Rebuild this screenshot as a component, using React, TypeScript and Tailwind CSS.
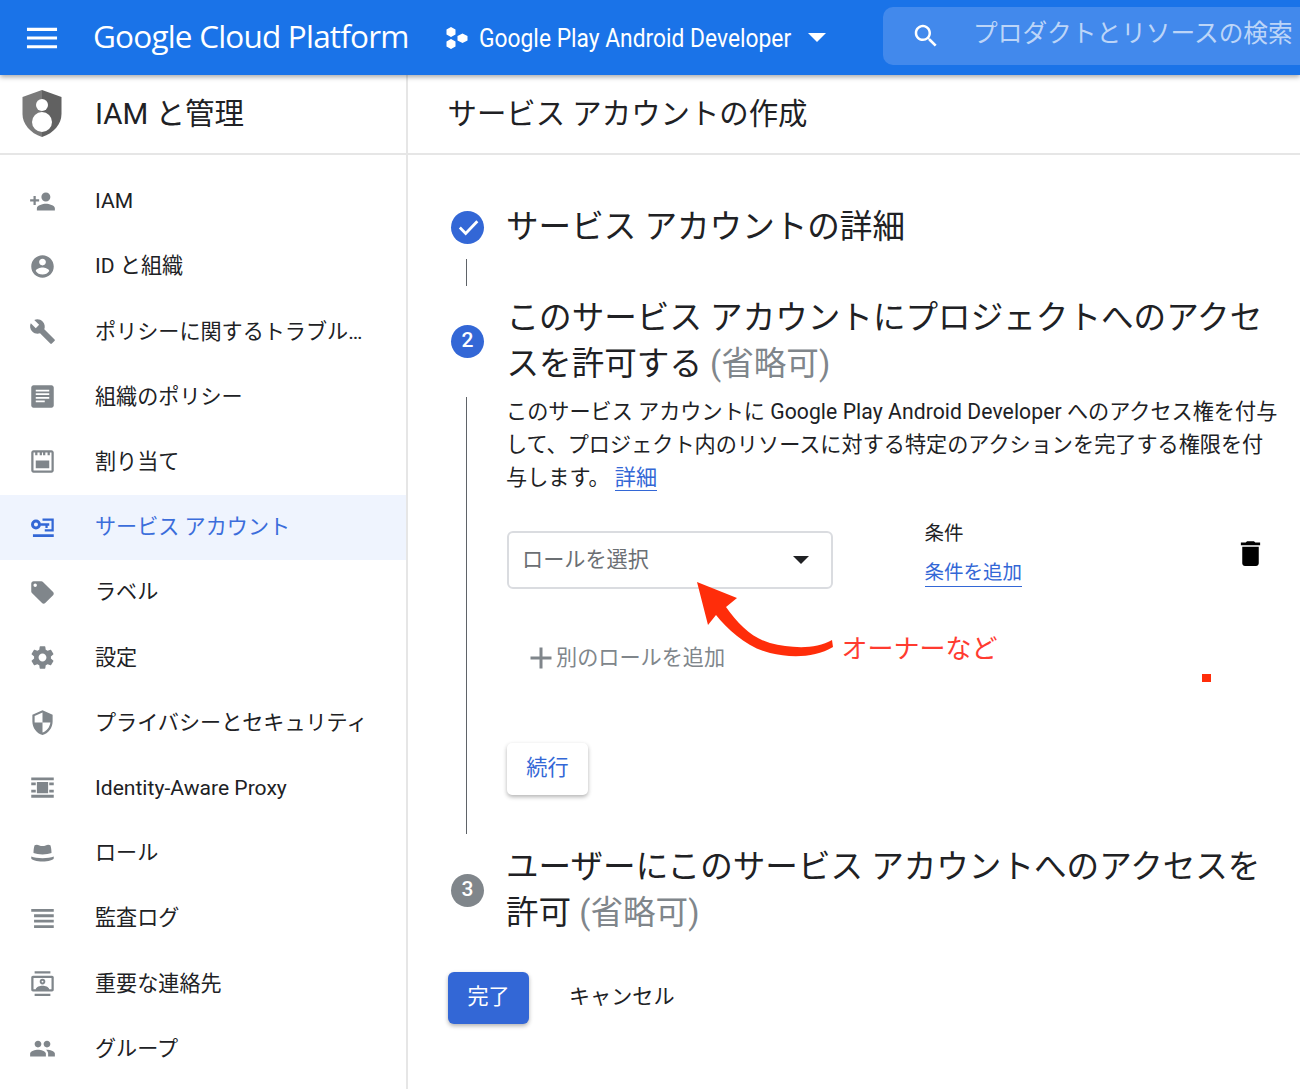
import type { ReactNode } from "react";

const FONT = "font-['Roboto','Noto_Sans_CJK_JP',sans-serif]";

function Icon({ children, className = "" }: { children: ReactNode; className?: string }) {
  return (
    <svg viewBox="0 0 24 24" fill="currentColor" className={className}>
      {children}
    </svg>
  );
}

const navItems: { label: string; active?: boolean; icon: ReactNode }[] = [
  {
    label: "IAM",
    icon: <path d="M15 12c2.21 0 4-1.79 4-4s-1.79-4-4-4-4 1.79-4 4 1.79 4 4 4zm-9-2V7H4v3H1v2h3v3h2v-3h3v-2H6zm9 4c-2.67 0-8 1.34-8 4v2h16v-2c0-2.66-5.33-4-8-4z" />,
  },
  {
    label: "ID と組織",
    icon: <path d="M12 2C6.48 2 2 6.48 2 12s4.48 10 10 10 10-4.48 10-10S17.52 2 12 2zm0 3c1.66 0 3 1.34 3 3s-1.34 3-3 3-3-1.34-3-3 1.34-3 3-3zm0 14.2c-2.5 0-4.71-1.28-6-3.22.03-1.99 4-3.08 6-3.08 1.99 0 5.97 1.09 6 3.08-1.29 1.94-3.5 3.22-6 3.22z" />,
  },
  {
    label: "ポリシーに関するトラブル…",
    icon: <path d="M22.7 19l-9.1-9.1c.9-2.3.4-5-1.5-6.9-2-2-5-2.4-7.4-1.3L9 6 6 9 1.6 4.7C.4 7.1.9 10.1 2.9 12.1c1.9 1.9 4.6 2.4 6.9 1.5l9.1 9.1c.4.4 1 .4 1.4 0l2.3-2.3c.5-.4.5-1.1.1-1.4z" />,
  },
  {
    label: "組織のポリシー",
    icon: <path fillRule="evenodd" d="M4 2h16c1.1 0 2 .9 2 2v16c0 1.1-.9 2-2 2H4c-1.1 0-2-.9-2-2V4c0-1.1.9-2 2-2zm2 4v1.5h12V6H6zm0 3.2v1.5h12V9.2H6zm0 3.2v1.5h12v-1.5H6zm0 3.2v1.5h8v-1.5H6z" />,
  },
  {
    label: "割り当て",
    icon: <path fillRule="evenodd" d="M4 2h16c1.1 0 2 .9 2 2v16c0 1.1-.9 2-2 2H4c-1.1 0-2-.9-2-2V4c0-1.1.9-2 2-2zm0 2v16h16V4h-1.5v2.5h-2V4h-2v2.5h-2V4h-1v2.5h-2V4h-2v2.5h-2V4H4zm2 7h12v7H6v-7z" />,
  },
  {
    label: "サービス アカウント",
    active: true,
    icon: (
      <>
        <path fillRule="evenodd" d="M6.200 4.900a4.400 4.400 0 1 1 0 8.800 4.400 4.400 0 0 1 0-8.800zm0 2.600a1.800 1.800 0 1 0 0 3.600 1.800 1.800 0 0 0 0-3.600z" />
        <path d="M10 8.200h8v2.200h-1.400v2h-2v-2H10zM12 4h10v11.500h-8v-2h6V6h-8zM3.500 18H22v2.500H3.500z" />
      </>
    ),
  },
  {
    label: "ラベル",
    icon: <path d="M21.41 11.58l-9-9C12.05 2.22 11.55 2 11 2H4c-1.1 0-2 .9-2 2v7c0 .55.22 1.05.59 1.42l9 9c.36.36.86.58 1.41.58.55 0 1.05-.22 1.41-.59l7-7c.37-.36.59-.86.59-1.41 0-.55-.23-1.06-.59-1.42zM5.5 7C4.67 7 4 6.33 4 5.5S4.67 4 5.5 4 7 4.67 7 5.5 6.33 7 5.5 7z" />,
  },
  {
    label: "設定",
    icon: <path d="M19.43 12.98c.04-.32.07-.64.07-.98s-.03-.66-.07-.98l2.11-1.65c.19-.15.24-.42.12-.64l-2-3.46c-.12-.22-.39-.3-.61-.22l-2.49 1c-.52-.4-1.08-.73-1.69-.98l-.38-2.65C14.46 2.18 14.25 2 14 2h-4c-.25 0-.46.18-.49.42l-.38 2.65c-.61.25-1.17.59-1.69.98l-2.49-1c-.23-.09-.49 0-.61.22l-2 3.46c-.13.22-.07.49.12.64l2.11 1.65c-.04.32-.07.65-.07.98s.03.66.07.98l-2.11 1.65c-.19.15-.24.42-.12.64l2 3.46c.12.22.39.3.61.22l2.49-1c.52.4 1.08.73 1.69.98l.38 2.65c.03.24.24.42.49.42h4c.25 0 .46-.18.49-.42l.38-2.65c.61-.25 1.17-.59 1.69-.98l2.49 1c.23.09.49 0 .61-.22l2-3.46c.12-.22.07-.49-.12-.64l-2.11-1.65zM12 15.5c-1.93 0-3.5-1.57-3.5-3.5s1.57-3.5 3.5-3.5 3.5 1.57 3.5 3.5-1.57 3.5-3.5 3.5z" />,
  },
  {
    label: "プライバシーとセキュリティ",
    icon: <path d="M12 1L3 5v6c0 5.55 3.84 10.74 9 12 5.16-1.26 9-6.45 9-12V5l-9-4zm0 10.99h7c-.53 4.12-3.28 7.79-7 8.94V12H5V6.3l7-3.11v8.8z" />,
  },
  {
    label: "Identity-Aware Proxy",
    icon: <path d="M2 3h20v2.500H2zM2 18.500h20V21H2zM2 7.500h4V10H2zM18 7.500h4V10h-4zM2 14h4v2.500H2zM18 14h4v2.500h-4zM7 7h10v10H7z" />,
  },
  {
    label: "ロール",
    icon: <path d="M5 5.500c1.500-.8 3-.5 4.200.2.900.5 1.700.5 2.800.5s1.900 0 2.800-.5c1.200-.7 2.700-1 4.200-.2.700 2 1 4.500 1 7-2 .8-5 1.300-8 1.300s-6-.5-8-1.300c0-2.500.3-5 1-7zM2 15.500c2.500 1 6 1.500 10 1.500s7.500-.5 10-1.500V17c0 1.500-5 3-10 3S2 18.500 2 17v-1.500z" />,
  },
  {
    label: "監査ログ",
    icon: <path d="M2 3.500h20v2.500H2V3.500zm2.500 4.800H22v2.500H4.500V8.300zm0 4.800H22v2.500H4.500v-2.500zm0 4.800H22v2.500H4.500v-2.500z" />,
  },
  {
    label: "重要な連絡先",
    icon: <path fillRule="evenodd" d="M5 1h14v2H5V1zm0 20h14v2H5v-2zM3.500 5h17C21.300 5 22 5.700 22 6.500v11c0 .8-.7 1.500-1.500 1.500h-17C2.700 19 2 18.300 2 17.500v-11C2 5.700 2.700 5 3.500 5zM4 7v10h2c.5-2 3.500-3 6-3s5.500 1 6 3h2V7H4zm8 .8a2.500 2.500 0 1 1 0 5 2.500 2.500 0 0 1 0-5zm0 1.700a.8.8 0 1 0 0 1.600.8.8 0 0 0 0-1.600z" />,
  },
  {
    label: "グループ",
    icon: <path d="M16 11c1.66 0 2.99-1.34 2.99-3S17.66 5 16 5c-1.66 0-3 1.34-3 3s1.34 3 3 3zm-8 0c1.66 0 2.99-1.34 2.99-3S9.66 5 8 5C6.34 5 5 6.34 5 8s1.34 3 3 3zm0 2c-2.33 0-7 1.170-7 3.500V19h14v-2.500c0-2.330-4.670-3.500-7-3.500zm8 0c-.29 0-.62.02-.97.05 1.160.84 1.970 1.970 1.970 3.450V19h6v-2.500c0-2.330-4.670-3.500-7-3.500z" />,
  },
];

function Header() {
  return (
    <header className="relative z-10 flex h-[75px] items-center bg-[#1a73e8] text-white shadow-[0_2px_5px_rgba(0,0,0,0.35)]">
      <Icon className="ml-[23px] h-[38px] w-[38px] shrink-0">
        <path d="M2.500 5.500h19v2h-19zM2.500 11h19v2h-19zM2.500 16.500h19v2h-19z" />
      </Icon>
      <span className="mb-[4px] ml-[32px] w-[353px] shrink-0 font-['Open_Sans',sans-serif] text-[31.500px] tracking-[-0.8px] whitespace-nowrap">
        Google Cloud Platform
      </span>
      <svg viewBox="0 0 22 24" fill="currentColor" className="h-[24px] w-[22px] shrink-0">
        <path d="M5 1 9.500 3.500v5L5 11 .5 8.500v-5zM5 13 9.500 15.500v5L5 23 .5 20.500v-5zM16.500 7.500 21.500 10v4.500L16.500 17l-5-2.500V10z" />
      </svg>
      <span className="mt-[2px] ml-[11px] w-[312px] shrink-0 origin-left scale-x-[0.912] text-[25px] whitespace-nowrap">
        Google Play Android Developer
      </span>
      <span className="ml-[17px] h-0 w-0 shrink-0 border-x-[9px] border-t-[9px] border-x-transparent border-t-white" />
      <div className="mb-[3px] ml-[57px] flex h-[58px] flex-1 items-center overflow-hidden rounded-l-[10px] bg-[#4289ec]">
        <Icon className="ml-[28px] h-[30px] w-[30px] shrink-0">
          <path d="M15.500 14h-.79l-.28-.27C15.410 12.590 16 11.110 16 9.500 16 5.910 13.090 3 9.500 3S3 5.910 3 9.500 5.910 16 9.500 16c1.610 0 3.090-.59 4.230-1.570l.27.28v.79l5 4.990L20.490 19l-4.990-5zm-6 0C7.010 14 5 11.990 5 9.500S7.010 5 9.500 5 14 7.010 14 9.500 11.990 14 9.500 14z" />
        </Icon>
        <span className="mb-[5px] ml-[32px] text-[24.700px] whitespace-nowrap text-[#bcd5f8]">
          プロダクトとリソースの検索
        </span>
      </div>
    </header>
  );
}

function Sidebar() {
  return (
    <aside className="w-[408px] shrink-0 border-r-2 border-[#e6e6e6]">
      <div className="flex h-[80px] items-center border-b-2 border-[#e6e6e6] pl-[22px]">
        <svg viewBox="0 0 40 48" className="h-[48px] w-[40px] shrink-0">
          <path fill="#7a7a7a" d="M20 0 .5 7v17C.5 34 8 43 20 47z" />
          <path fill="#616161" d="M20 0 39.500 7v17C39.500 34 32 43 20 47z" />
          <circle cx="20" cy="15" r="6" fill="#fff" />
          <circle cx="20" cy="32" r="10" fill="#fff" />
        </svg>
        <span className="ml-[33px] text-[29.500px] text-[#202124]">IAM と管理</span>
      </div>
      <nav className="pt-[14px]">
        {navItems.map((item) => (
          <div
            key={item.label}
            className={
              item.active
                ? "flex h-[65.200px] items-center bg-[#eff4fe] pb-[1px] pl-[29px] text-[#3b6ddb]"
                : "flex h-[65.200px] items-center pb-[1px] pl-[29px] text-[#202124]"
            }
          >
            <Icon
              className={
                item.active
                  ? "h-[27px] w-[27px] shrink-0 text-[#3367d6]"
                  : "h-[27px] w-[27px] shrink-0 text-[#80868b]"
              }
            >
              {item.icon}
            </Icon>
            <span className="ml-[39px] text-[21.100px] whitespace-nowrap">{item.label}</span>
          </div>
        ))}
      </nav>
    </aside>
  );
}

function StepBadge({ children, gray }: { children: ReactNode; gray?: boolean }) {
  return (
    <div
      className={
        gray
          ? "ml-[3px] flex h-[33px] w-[33px] items-center justify-center rounded-full bg-[#80868b] text-[21px] font-medium text-white"
          : "ml-[3px] flex h-[33px] w-[33px] items-center justify-center rounded-full bg-[#3367d6] text-[21px] font-medium text-white"
      }
    >
      {children}
    </div>
  );
}

function MainContent() {
  return (
    <main className="relative min-w-0 flex-1">
      <div className="flex h-[80px] items-center border-b-2 border-[#e6e6e6] pt-[1px] pl-[39.500px] text-[29.400px] text-[#202124]">
        サービス アカウントの作成
      </div>
      <div className="pt-[49px] pl-[40px] text-[#202124]">
        <div className="flex items-center">
          <div className="w-[59px] shrink-0">
            <div className="ml-[3px] flex h-[33px] w-[33px] items-center justify-center rounded-full bg-[#3367d6]">
              <svg viewBox="0 0 24 24" fill="none" stroke="#fff" strokeWidth="2.400" className="h-[28px] w-[28px]">
                <path d="M5 12.500l5 5L20 7" />
              </svg>
            </div>
          </div>
          <h2 className="-ml-[1px] text-[32.600px] leading-[46px] font-normal">サービス アカウントの詳細</h2>
        </div>
        <div className="mt-[9px] ml-[18px] h-[27px] w-px bg-[#5f6368]" />

        <div className="mt-[9px] flex items-center">
          <div className="w-[59px] shrink-0">
            <StepBadge>2</StepBadge>
          </div>
          <h2 className="-ml-[0.500px] text-[32.600px] leading-[46px] whitespace-nowrap">
            このサービス アカウントにプロジェクトへのアクセ
            <br />
            スを許可する <span className="text-[#80868b]">(省略可)</span>
          </h2>
        </div>

        <div className="mt-[8px] flex">
          <div className="w-[59px] shrink-0">
            <div className="mt-[2px] ml-[18px] h-[437px] w-px bg-[#5f6368]" />
          </div>
          <div className="-ml-[1px] flex-1">
            <p className="text-[21.150px] leading-[33px] whitespace-nowrap">
              このサービス アカウントに <span className="tracking-[0.07px]">Google Play Android Developer</span> へのアクセス権を付与
              <br />
              して、プロジェクト内のリソースに対する特定のアクションを完了する権限を付
              <br />
              与します。 <span className="border-b border-[#3367d6] text-[#3367d6]">詳細</span>
            </p>

            <div className="mt-[25.500px] flex items-start pr-[33px]">
              <div className="mt-[11px] ml-[1px] flex h-[58px] w-[326px] items-center justify-between rounded-[6px] border-2 border-[#dadce0] pr-[22px] pl-[13px] text-[21.150px] text-[#6b6f73]">
                ロールを選択
                <span className="h-0 w-0 border-x-[8px] border-t-[8px] border-x-transparent border-t-[#202124]" />
              </div>
              <div className="mt-[1px] ml-[91.500px] text-[19.500px]">
                <div className="leading-[26px]">条件</div>
                <div className="mt-[13px] w-fit border-b border-[#3367d6] leading-[26px] text-[#3367d6]">条件を追加</div>
              </div>
              <Icon className="mt-[17px] ml-auto h-[33px] w-[33px] text-black">
                <path d="M6 19c0 1.100.9 2 2 2h8c1.100 0 2-.9 2-2V7H6v12zM19 4h-3.500l-1-1h-5l-1 1H5v2h14V4z" />
              </Icon>
            </div>

            <div className="mt-[54px] flex h-[30px] items-center pl-[17px] text-[21.150px] text-[#80868b]">
              <Icon className="-mr-[3px] h-[36px] w-[36px] shrink-0">
                <path d="M19 13h-6v6h-2v-6H5v-2h6V5h2v6h6v2z" />
              </Icon>
              別のロールを追加
            </div>

            <button className="mt-[70px] ml-[1px] flex h-[52px] w-[81px] items-center justify-center rounded-[5px] bg-white pb-[2px] text-[21.150px] text-[#3367d6] shadow-[0_2px_4px_rgba(0,0,0,0.3)]">
              続行
            </button>
          </div>
        </div>

        <div className="mt-[10px] flex items-center">
          <div className="w-[59px] shrink-0">
            <StepBadge gray>3</StepBadge>
          </div>
          <h2 className="-ml-[1px] text-[32.600px] leading-[46px] whitespace-nowrap">
            ユーザーにこのサービス アカウントへのアクセスを
            <br />
            許可 <span className="text-[#80868b]">(省略可)</span>
          </h2>
        </div>

        <div className="mt-[36px] flex items-center">
          <button className="flex h-[52px] w-[81px] items-center justify-center rounded-[6px] bg-[#3367d6] pb-[2px] text-[21.100px] text-white shadow-[0_2px_4px_rgba(0,0,0,0.3)]">
            完了
          </button>
          <span className="mb-[2px] ml-[40px] text-[21.100px]">キャンセル</span>
        </div>
      </div>

      {/* annotation drawn over the page */}
      <svg viewBox="0 0 150 85" className="absolute top-[503px] left-[282px] h-[85px] w-[150px]" fill="#ff2d0a">
        <path d="M7 4 47 20 36 29C48 46 62 60 80 65 100 70 125 72 142 62L143 69C125 80 100 80 80 75 58 70 38 52 26 37L18 47z" />
      </svg>
      <span className="absolute top-[551px] left-[433.500px] text-[26px] leading-[46px] text-[#ff3b30]">オーナーなど</span>
      <span className="absolute top-[599px] left-[794px] h-[8px] w-[9px] bg-[#ff2d0a]" />
    </main>
  );
}

export default function App() {
  return (
    <div className={`${FONT} h-[1089px] overflow-hidden bg-white`}>
      <Header />
      <div className="flex h-[1014px]">
        <Sidebar />
        <MainContent />
      </div>
    </div>
  );
}
